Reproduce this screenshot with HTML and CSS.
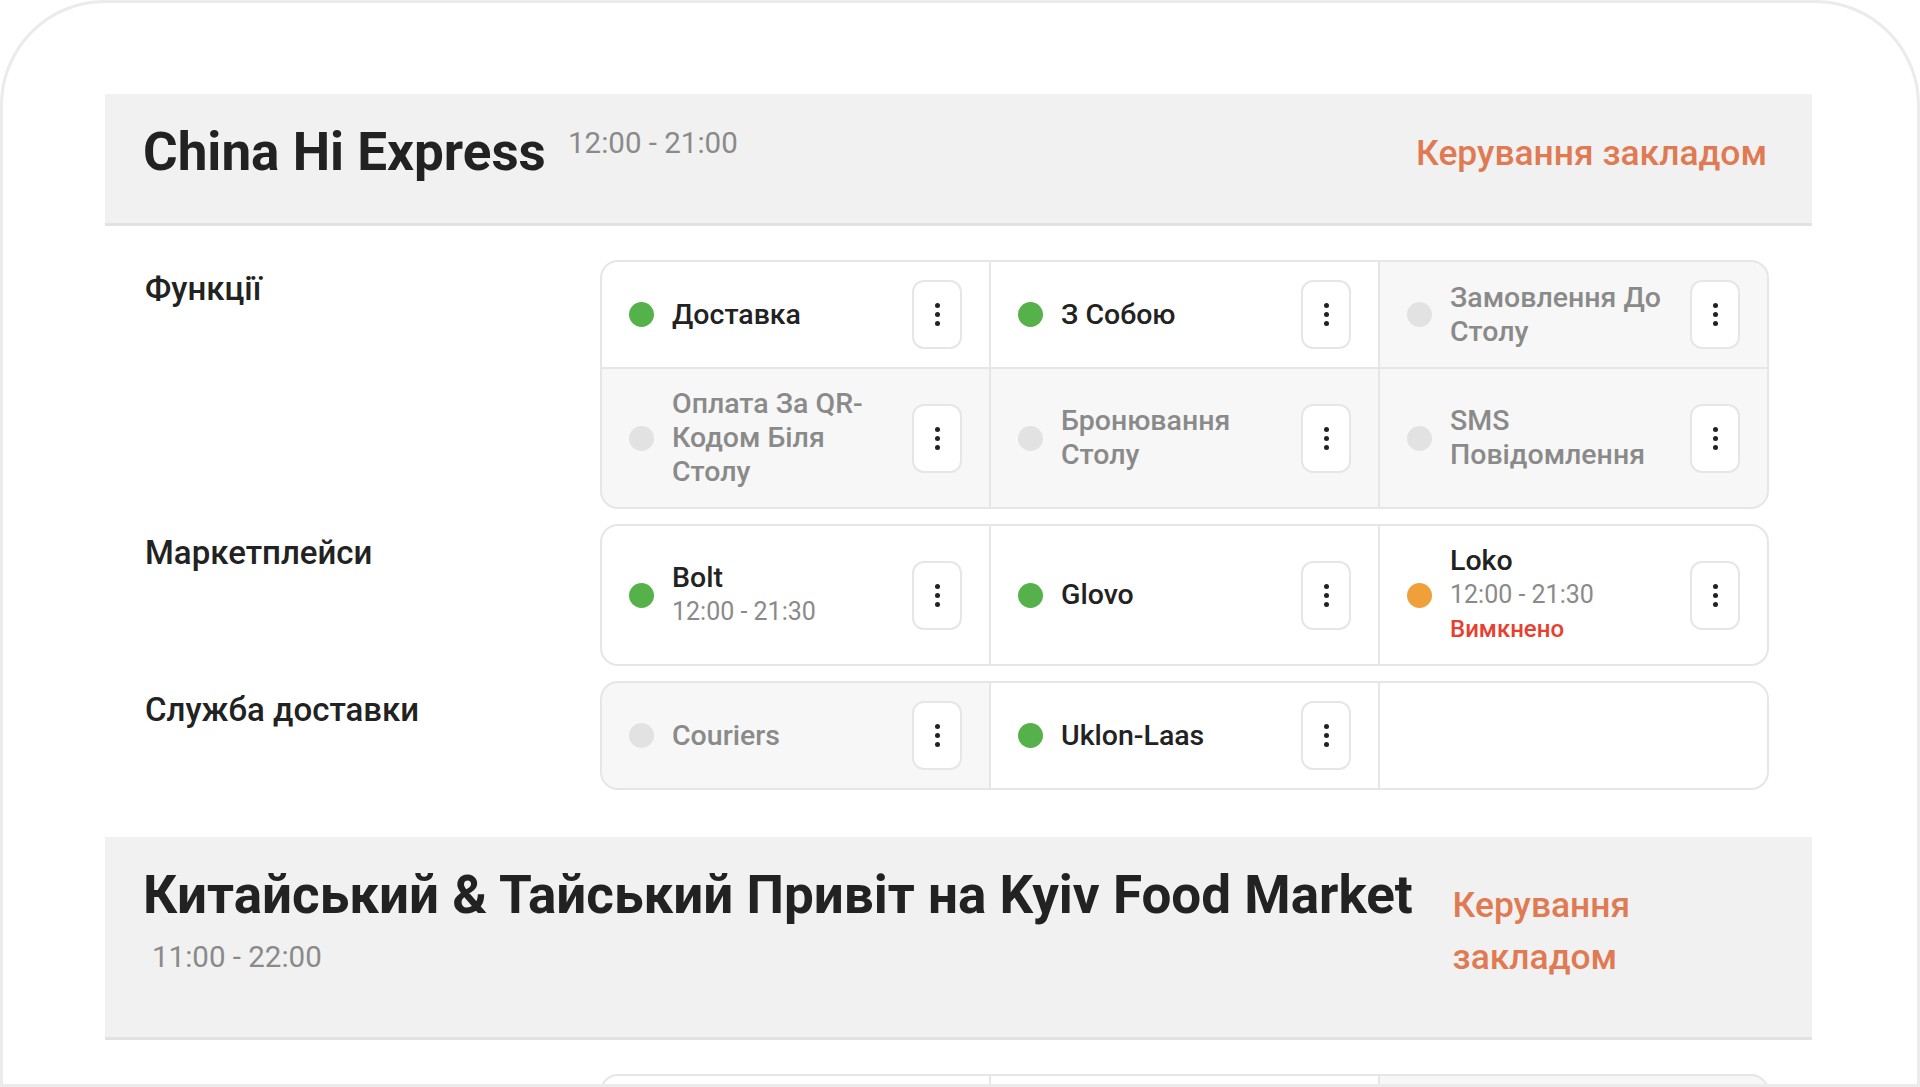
FILE: index.html
```html
<!DOCTYPE html>
<html lang="uk">
<head>
  <meta charset="UTF-8">
  <meta name="viewport" content="width=device-width, initial-scale=1.0">
  <title>Заклади</title>
  <link rel="stylesheet" href="styles.css">
</head>
<body>
  <div class="frame">

    <section class="venue">
      <header class="venue-head">
        <h2 class="venue-name">China Hi Express <span class="hours">12:00 - 21:00</span></h2>
        <a class="manage" href="#">Керування закладом</a>
      </header>

      <div class="groups">
        <div class="group">
          <div class="group-label">Функції</div>
          <div class="tiles">
            <div class="tile"><span class="dot"></span><div class="tile-text">Доставка</div><button class="more"><span class="kebab"></span></button></div>
            <div class="tile"><span class="dot"></span><div class="tile-text">З Собою</div><button class="more"><span class="kebab"></span></button></div>
            <div class="tile off"><span class="dot"></span><div class="tile-text">Замовлення До Столу</div><button class="more"><span class="kebab"></span></button></div>
            <div class="tile off"><span class="dot"></span><div class="tile-text">Оплата За QR-Кодом Біля Столу</div><button class="more"><span class="kebab"></span></button></div>
            <div class="tile off"><span class="dot"></span><div class="tile-text">Бронювання Столу</div><button class="more"><span class="kebab"></span></button></div>
            <div class="tile off"><span class="dot"></span><div class="tile-text">SMS Повідомлення</div><button class="more"><span class="kebab"></span></button></div>
          </div>
        </div>

        <div class="group">
          <div class="group-label">Маркетплейси</div>
          <div class="tiles">
            <div class="tile"><span class="dot"></span><div class="tile-text">Bolt<span class="sub">12:00 - 21:30</span></div><button class="more"><span class="kebab"></span></button></div>
            <div class="tile"><span class="dot"></span><div class="tile-text">Glovo</div><button class="more"><span class="kebab"></span></button></div>
            <div class="tile"><span class="dot warn"></span><div class="tile-text">Loko<span class="sub">12:00 - 21:30</span><span class="alert">Вимкнено</span></div><button class="more"><span class="kebab"></span></button></div>
          </div>
        </div>

        <div class="group">
          <div class="group-label">Служба доставки</div>
          <div class="tiles">
            <div class="tile off"><span class="dot"></span><div class="tile-text">Couriers</div><button class="more"><span class="kebab"></span></button></div>
            <div class="tile"><span class="dot"></span><div class="tile-text">Uklon-Laas</div><button class="more"><span class="kebab"></span></button></div>
            <div class="tile"></div>
          </div>
        </div>
      </div>
    </section>

    <section class="venue">
      <header class="venue-head">
        <h2 class="venue-name">Китайський &amp; Тайський Привіт на Kyiv Food Market <span class="hours">11:00 - 22:00</span></h2>
        <a class="manage" href="#">Керування закладом</a>
      </header>

      <div class="groups">
        <div class="group">
          <div class="group-label">Функції</div>
          <div class="tiles">
            <div class="tile"><span class="dot"></span><div class="tile-text">Доставка</div><button class="more"><span class="kebab"></span></button></div>
            <div class="tile"><span class="dot"></span><div class="tile-text">З Собою</div><button class="more"><span class="kebab"></span></button></div>
            <div class="tile off"><span class="dot"></span><div class="tile-text">Замовлення До Столу</div><button class="more"><span class="kebab"></span></button></div>
          </div>
        </div>
      </div>
    </section>

  </div>
</body>
</html>
```

FILE: styles.css
```css
:root {
  --text: #222;
  --muted: #8a8a8a;
  --line: #e6e6e6;
  --head-bg: #f1f1f1;
  --accent: #e07a52;
  --on: #55b24a;
  --warn: #f0a03b;
  --off: #e2e2e2;
  --danger: #e8402f;
}

body {
  margin: 0;
  background: #fff;
  color: var(--text);
  font-family: Roboto, "Noto Sans", sans-serif;
  overflow: hidden;
}

.frame {
  height: 1087px;
  box-sizing: border-box;
  border: 3px solid #ebebeb;
  border-radius: 105px 105px 0 0;
  padding: 91px 105px 0 102px;
  overflow: hidden;
}

.venue {
  padding-bottom: 47px;
}

/* grey band with the venue name */
.venue-head {
  display: flex;
  justify-content: space-between;
  align-items: center;
  padding: 23px 45px 35px 38px;
  background: var(--head-bg);
  border-bottom: 3px solid #e2e2e2;
}

.venue-name {
  margin: 0;
  font-size: 53px;
  line-height: 71px;
  font-weight: 700;
}

.hours {
  margin-left: 9px;
  font-size: 29.5px;
  line-height: 52px;
  font-weight: 400;
  color: var(--muted);
  vertical-align: top;
}

.manage {
  font-size: 35.4px;
  line-height: 52px;
  font-weight: 500;
  color: var(--accent);
  text-decoration: none;
}

.groups {
  display: flex;
  flex-direction: column;
  gap: 15px;
  padding: 34px 43px 0 40px;
}

.group {
  display: grid;
  grid-template-columns: 455px 1fr;
  align-items: start;
}

.group-label {
  padding-top: 11px;
  font-size: 33px;
  line-height: 36px;
  font-weight: 500;
}

/* 3-column card, gaps show as divider lines */
.tiles {
  display: grid;
  grid-template-columns: repeat(3, 1fr);
  gap: 2px;
  background: var(--line);
  border: 2px solid var(--line);
  border-radius: 18px;
  overflow: hidden;
}

.tile {
  display: flex;
  align-items: center;
  gap: 18px;
  padding: 18px 27px;
  background: #fff;
}

.tile.off {
  background: #f7f7f7;
  color: var(--muted);
}

.dot {
  flex: none;
  width: 25px;
  height: 25px;
  border-radius: 50%;
  background: var(--on);
}

.tile.off .dot {
  background: var(--off);
}

.dot.warn {
  background: var(--warn);
}

.tile-text {
  flex: 1;
  font-size: 28.5px;
  line-height: 34px;
  font-weight: 500;
}

.sub {
  display: block;
  font-size: 25px;
  font-weight: 400;
  color: var(--muted);
}

.alert {
  display: block;
  font-size: 24px;
  font-weight: 500;
  color: var(--danger);
}

.more {
  flex: none;
  display: flex;
  align-items: center;
  justify-content: center;
  width: 50px;
  height: 69px;
  padding: 0;
  border: 2px solid var(--line);
  border-radius: 12px;
  background: #fff;
  cursor: pointer;
}

/* vertical three-dot icon */
.kebab {
  width: 5px;
  height: 5px;
  border-radius: 50%;
  background: var(--text);
  box-shadow: 0 -9px 0 var(--text), 0 9px 0 var(--text);
}
```
